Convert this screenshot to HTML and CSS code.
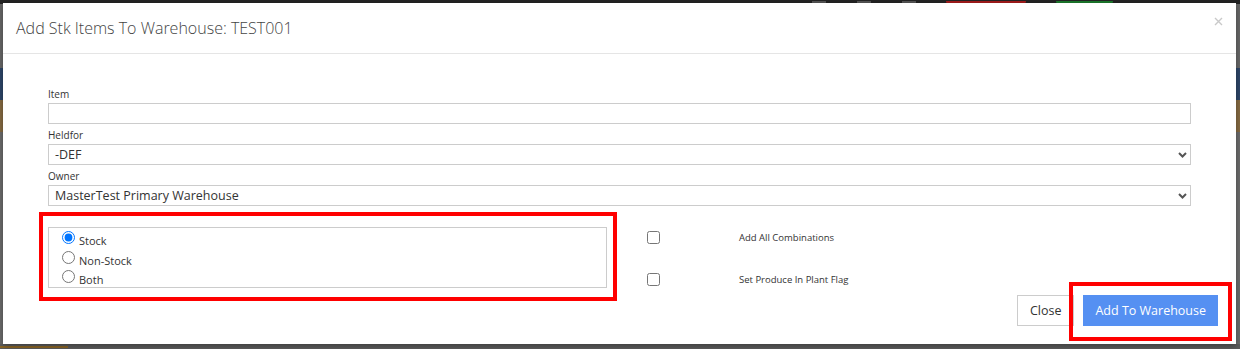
FILE: index.html
```html
<!DOCTYPE html>
<html lang="en">
<head>
  <meta charset="UTF-8">
  <title>Add Stk Items To Warehouse</title>
  <link rel="stylesheet" href="styles.css">
</head>
<body>
  <div class="page">
    <div class="topbar">
      <span class="tb-icon"></span>
      <span class="tb-icon"></span>
      <span class="tb-icon"></span>
      <span class="pill pill-red"></span>
      <span class="pill pill-green"></span>
    </div>
    <div class="band band-blue"></div>
    <div class="band band-tan"></div>
    <div class="page-rest"></div>
    <div class="page-foot"><span class="foot-bar"></span></div>
  </div>

  <div class="modal">
    <div class="modal-header">
      <h4 class="modal-title">Add Stk Items To Warehouse: TEST001</h4>
      <button type="button" class="close" aria-label="Close">
        <svg width="9" height="9" viewBox="0 0 9 9"><path d="M1 1 L8 8 M8 1 L1 8" stroke="#c9c9c9" stroke-width="1.4" fill="none"/></svg>
      </button>
    </div>

    <div class="modal-body">
      <div class="form-group">
        <label for="item">Item</label>
        <input type="text" id="item" class="form-control">
      </div>
      <div class="form-group">
        <label for="heldfor">Heldfor</label>
        <div class="select-wrap">
          <select id="heldfor" class="form-control">
            <option>-DEF</option>
          </select>
          <svg class="chevron" width="9" height="6" viewBox="0 0 9 6"><polyline points="1,1 4.5,4.5 8,1" stroke="#555" stroke-width="2" fill="none"/></svg>
        </div>
      </div>
      <div class="form-group">
        <label for="owner">Owner</label>
        <div class="select-wrap">
          <select id="owner" class="form-control">
            <option>MasterTest Primary Warehouse</option>
          </select>
          <svg class="chevron" width="9" height="6" viewBox="0 0 9 6"><polyline points="1,1 4.5,4.5 8,1" stroke="#555" stroke-width="2" fill="none"/></svg>
        </div>
      </div>

      <div class="options-row">
        <div class="type-box highlight-left">
          <label class="radio-row"><input type="radio" name="stype" checked><span>Stock</span></label>
          <label class="radio-row"><input type="radio" name="stype"><span>Non-Stock</span></label>
          <label class="radio-row"><input type="radio" name="stype"><span>Both</span></label>
        </div>
        <div class="flags">
          <div class="flag-row">
            <input type="checkbox" id="allcomb">
            <label for="allcomb">Add All Combinations</label>
          </div>
          <div class="flag-row">
            <input type="checkbox" id="plantflag">
            <label for="plantflag">Set Produce In Plant Flag</label>
          </div>
        </div>
      </div>
    </div>

    <div class="modal-footer">
      <button type="button" class="btn btn-default">Close</button>
      <button type="button" class="btn btn-primary highlight-btn">Add To Warehouse</button>
    </div>
  </div>
</body>
</html>
```

FILE: styles.css
```css
body {
  margin: 0;
  font-family: "Open Sans", "DejaVu Sans", sans-serif;
  background-color: #676767;
  overflow: hidden;
}
.page {
  height: 349px;
  display: flex;
  flex-direction: column;
}
.topbar {
  height: 4px;
  background: #232323;
  display: flex;
  align-items: flex-end;
  overflow: hidden;
}
.tb-icon {
  width: 14px;
  height: 3px;
  background: #555;
  margin-left: 31px;
}
.tb-icon:first-child {
  margin-left: 812px;
}
.pill {
  height: 3px;
  border-radius: 0 0 8px 8px;
}
.pill-red {
  width: 80px;
  margin-left: 30px;
  background: #a51c1c;
}
.pill-green {
  width: 57px;
  margin-left: 30px;
  background: #1c7a2c;
}
.band {
  height: 32px;
}
.band-blue {
  margin-top: 64px;
  background: #2e4668;
}
.band-tan {
  background: #856a42;
}
.page-rest {
  flex: 1;
  background: #6b6b6b;
}
.page-foot {
  height: 5px;
  background: #5c5c5c;
  display: flex;
  align-items: center;
}
.foot-bar {
  width: 68px;
  height: 2px;
  background: #8a6526;
}

/* dialog */
.modal {
  position: absolute;
  top: 3px;
  left: 3px;
  width: 1233px;
  background: #fff;
  box-shadow: 0 2px 6px rgba(0, 0, 0, 0.35);
  color: #333;
}
.modal-header {
  height: 50px;
  padding: 0 13px;
  border-bottom: 1px solid #e5e5e5;
  display: flex;
  align-items: center;
  justify-content: space-between;
}
.modal-title {
  margin: 0;
  font-size: 16px;
  font-weight: 300;
  color: #444;
}
.close {
  border: none;
  background: none;
  padding: 0;
  margin-top: -13px;
  width: 9px;
  height: 9px;
  display: flex;
  cursor: pointer;
}
.modal-body {
  padding: 33px 45px 0;
}
.form-group {
  margin-bottom: 4px;
}
.form-group label {
  display: block;
  font-size: 10px;
  line-height: 14px;
  margin-bottom: 2px;
  color: #333;
}
.form-control {
  display: block;
  width: 100%;
  height: 21px;
  box-sizing: border-box;
  border: 1px solid #ccc;
  border-radius: 0;
  padding: 0 6px;
  font-family: inherit;
  font-size: 12.5px;
  color: #333;
  background: #fff;
}
select.form-control {
  appearance: none;
  -webkit-appearance: none;
  line-height: 19px;
}
.select-wrap {
  position: relative;
}
.chevron {
  position: absolute;
  right: 4px;
  top: 8px;
  pointer-events: none;
}

.options-row {
  padding-top: 17px;
  display: grid;
  grid-template-columns: 559px 1fr;
  column-gap: 25px;
  align-items: start;
}
.type-box {
  position: relative;
  height: 61px;
  box-sizing: border-box;
  border: 1px solid #ccc;
  padding: 3px 0 0 13px;
}
.radio-row {
  display: flex;
  align-items: flex-start;
  height: 19.5px;
  font-size: 11px;
  line-height: 13px;
}
.radio-row input {
  margin: 0 4px 0 0;
  width: 13px;
  height: 13px;
}
.radio-row span {
  padding-top: 3px;
}
.flags {
  padding-top: 4px;
}
.flag-row {
  display: grid;
  grid-template-columns: 107px 1fr;
  align-items: start;
}
.flag-row + .flag-row {
  margin-top: 28.5px;
}
.flag-row input {
  margin: 0 0 0 15px;
  width: 13px;
  height: 13px;
}
.flag-row label {
  font-size: 9.5px;
  line-height: 13px;
  color: #333;
}

.modal-footer {
  display: flex;
  justify-content: flex-end;
  padding: 7px 18px 18px;
}
.btn {
  height: 31px;
  font-family: inherit;
  font-size: 12.5px;
  border-radius: 0;
  white-space: nowrap;
  cursor: pointer;
}
.btn-default {
  background: #fff;
  color: #333;
  border: 1px solid #ccc;
  padding: 0 12px;
  margin-right: 9px;
}
.btn-primary {
  background: #5590f2;
  color: #fff;
  border: none;
  padding: 0 12px;
}

/* red annotation frames */
.highlight-left::after,
.highlight-btn::after {
  content: "";
  position: absolute;
  border: 4px solid #ff0000;
  pointer-events: none;
}
.highlight-left::after {
  top: -16px;
  left: -10px;
  right: -11px;
  bottom: -14px;
}
.highlight-btn {
  position: relative;
}
.highlight-btn::after {
  top: -13px;
  left: -14px;
  right: -14px;
  bottom: -15px;
}
```
